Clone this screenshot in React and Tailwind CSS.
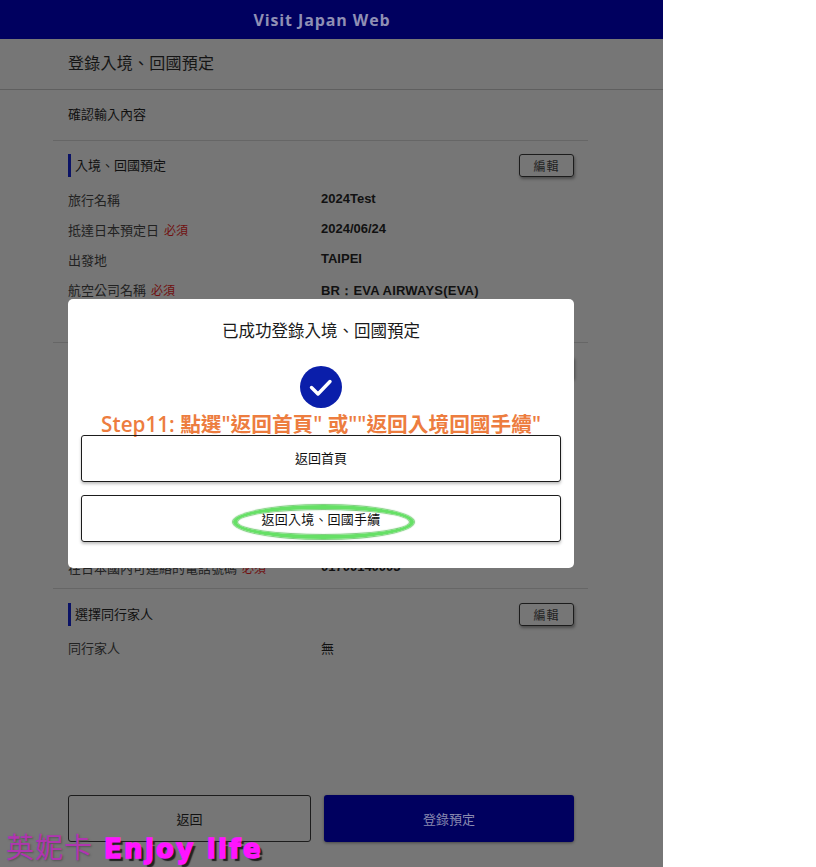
const cjk = "font-['Noto_Sans_CJK_TC','Noto_Sans_CJK_JP',sans-serif]";

function SectionHead({ title }) {
  return (
    <div className="flex items-center justify-between h-[23px]">
      <div className="flex items-center h-full border-l-[3px] border-[#0a1266] pl-[4px] text-[13px] text-[#111]">
        <span className="-mt-[2px]">{title}</span>
      </div>
      <div className="w-[55px] h-[23px] border border-[#1c1c1c] rounded-[3px] flex items-center justify-center text-[12px] tracking-[1px] text-[#222] shadow-[1px_2px_3px_rgba(0,0,0,0.35)]">編輯</div>
    </div>
  );
}

function Row({ label, req, value, bold, cls = "", valueCls = "-mt-[3px]" }) {
  return (
    <div className={`flex h-[30px] items-center ${cls}`}>
      <div className="w-[253px] text-[13px] text-[#222]">
        {label}
        {req && <span className="text-[#701010] text-[12px] ml-[5px]">必須</span>}
      </div>
      <div className={`text-[13px] text-[#111] ${valueCls} ${bold ? "font-['Liberation_Sans',sans-serif] font-bold" : ""}`}>{value}</div>
    </div>
  );
}

export default function App() {
  return (
    <div className={`relative w-[816px] h-[867px] overflow-hidden bg-white ${cjk}`}>
      <div className="relative w-[663px] h-[867px] bg-[#767676] flex flex-col">
        <header className="h-[39px] bg-[#00005f] flex items-center justify-center pr-[19px] text-[16px] font-bold tracking-[0.9px] text-[#8f8fb4] font-['Open_Sans',sans-serif]">
          Visit Japan Web
        </header>
        <div className="h-[51px] border-b border-[#5f5f5f] pl-[68px] pb-[4px] flex items-center text-[16px] tracking-[0.25px] text-[#151515]">
          登錄入境、回國預定
        </div>
        <div className="ml-[53px] mr-[75px] h-[51px] border-b border-[#666] pl-[15px] pb-[2px] flex items-center text-[13px] text-[#111]">
          確認輸入內容
        </div>
        <div className="ml-[53px] mr-[75px] pl-[15px] pr-[14px] pt-[13px] h-[202px] border-b border-[#666]">
          <SectionHead title="入境、回國預定" />
          <div className="mt-[8px]">
            <Row label="旅行名稱" value="2024Test" bold />
            <Row label="抵達日本預定日" req value="2024/06/24" bold />
            <Row label="出發地" value="TAIPEI" bold />
            <Row label="航空公司名稱" req value="BR：EVA AIRWAYS(EVA)" bold valueCls="mt-[1px] tracking-[0.2px]" />
          </div>
        </div>
        <div className="ml-[53px] mr-[75px] pl-[15px] pr-[14px] pt-[13px] h-[246px] border-b border-[#666] flex flex-col justify-between">
          <SectionHead title="住宿地點" />
          <Row label="在日本國內可連絡的電話號碼" req value="01700140003" bold cls="mb-[5px]" />
        </div>
        <div className="ml-[53px] mr-[75px] pl-[15px] pr-[14px] pt-[14px]">
          <SectionHead title="選擇同行家人" />
          <div className="mt-[7px]">
            <Row label="同行家人" value="無" valueCls="" />
          </div>
        </div>
        <div className="mt-auto mb-[25px] mx-[68px] flex gap-[13px]">
          <div className="w-[243px] h-[47px] border border-[#1c1c1c] rounded-[3px] flex items-center justify-center text-[13px] text-[#111]">返回</div>
          <div className="w-[250px] h-[47px] rounded-[3px] bg-[#00005f] flex items-center justify-center text-[13px] text-[#8a8ab0] shadow-[0_1px_3px_rgba(0,0,0,0.4)]">登錄預定</div>
        </div>

        {/* modal */}
        <div className="absolute left-[68px] top-[299px] w-[506px] h-[269px] bg-white rounded-[5px] px-[13px] flex flex-col items-center">
          <div className="mt-[19px] text-[16.5px] leading-[24px] text-[#1a1a1a]">已成功登錄入境、回國預定</div>
          <div className="mt-[24px] w-[42px] h-[42px] rounded-full bg-[#0a1eaa] flex items-center justify-center">
            <svg width="26" height="26" viewBox="0 0 26 26" fill="none" stroke="#fff" strokeWidth="3.4" strokeLinecap="round" strokeLinejoin="round">
              <path d="M3.5 13.5 L10 20 L22 7.5" />
            </svg>
          </div>
          <div className="mt-[3px] h-[26px] whitespace-nowrap text-[20.7px] leading-[26px] font-semibold text-[#ed7d3f] font-['Open_Sans','Noto_Sans_CJK_TC',sans-serif]">
            Step11: 點選"返回首頁" 或""返回入境回國手續"
          </div>
          <div className="mt-[-2px] w-[480px] h-[47px] border border-[#1c1c1c] rounded-[3px] flex items-center justify-center text-[13px] text-[#111] shadow-[0_2px_3px_rgba(0,0,0,0.25)]">
            <span className="-mt-[1px]">返回首頁</span>
          </div>
          <div className="relative mt-[13px] w-[480px] h-[47px] border border-[#1c1c1c] rounded-[3px] flex items-center justify-center text-[13px] tracking-[0.2px] text-[#111] shadow-[0_2px_3px_rgba(0,0,0,0.25)]">
            <span>返回入境、回國手續</span>
            <div className="absolute left-[151px] top-[9px] w-[181px] h-[34px] rounded-[50%] border-[4px] border-[#66e066] shadow-[0_0_1px_1px_rgba(60,180,60,0.7),inset_0_0_1px_1px_rgba(60,180,60,0.7)]" />
          </div>
        </div>

        {/* watermark */}
        <div className="absolute left-[6px] top-[833px] flex items-center h-[32px] whitespace-nowrap">
          <span className="text-[28px] leading-[32px] tracking-[1px] text-[#b035b0] font-['Liberation_Serif','Noto_Sans_CJK_TC',serif] [text-shadow:1px_1px_2px_#555]">英妮卡</span>
          <span className="ml-[11px] text-[26px] leading-[30px] font-bold text-[#ff14ff] tracking-[2.3px] font-['DejaVu_Sans',sans-serif] [-webkit-text-stroke:1.5px_#ff14ff] [text-shadow:3px_3px_1px_#222]">Enjoy life</span>
        </div>
      </div>
    </div>
  );
}
